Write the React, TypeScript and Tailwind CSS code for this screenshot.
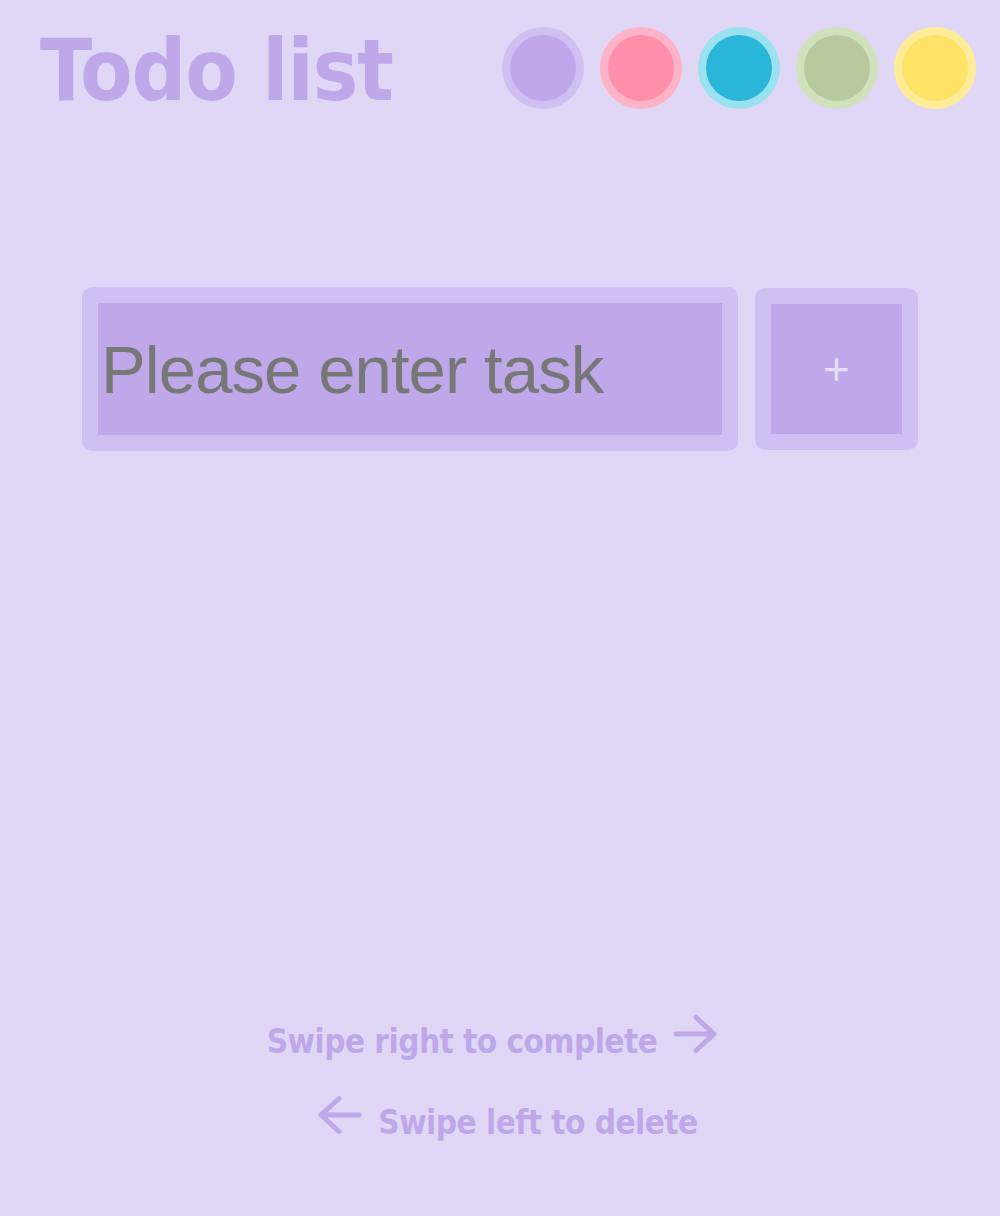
import React from 'react'

const swatches = [
  { ring: 'bg-[#d0bff2]', fill: 'bg-[#bea8ea]' },
  { ring: 'bg-[#ffb3c6]', fill: 'bg-[#ff8fab]' },
  { ring: 'bg-[#9ae2ef]', fill: 'bg-[#29b6d8]' },
  { ring: 'bg-[#d1e1bb]', fill: 'bg-[#b7c99d]' },
  { ring: 'bg-[#ffec99]', fill: 'bg-[#ffe366]' },
]

const Arrow: React.FC<{ dir: 'left' | 'right' }> = ({ dir }) => (
  <svg width="44" height="38" viewBox="0 0 44 38" className="mx-[16px] mb-[16px] shrink-0">
    {dir === 'right' ? (
      <path d="M3 19 H41 M23 2.5 L41 19 L23 35.5" fill="none" stroke="#bea8ea" strokeWidth="5" strokeLinecap="round" strokeLinejoin="round" />
    ) : (
      <path d="M41 19 H3 M21 2.5 L3 19 L21 35.5" fill="none" stroke="#bea8ea" strokeWidth="5" strokeLinecap="round" strokeLinejoin="round" />
    )}
  </svg>
)

const App: React.FC = () => {
  return (
    <div className="min-h-[1216px] bg-[#e0d7f6] flex flex-col font-['Tahoma','DejaVu_Sans_Condensed','DejaVu_Sans',sans-serif]">
      <header className="flex items-start justify-between pl-[40px] pr-[24px] pt-[27px] h-[109px]">
        <h1 className="text-[85px] leading-[82px] font-bold text-[#bea8ea] tracking-[-1px] mt-[3px]">Todo list</h1>
        <div className="flex gap-[16px]">
          {swatches.map((s, i) => (
            <div key={i} className={`w-[82px] h-[82px] rounded-full ${s.ring} flex items-center justify-center`}>
              <div className={`w-[66px] h-[66px] rounded-full ${s.fill}`} />
            </div>
          ))}
        </div>
      </header>

      <section className="flex gap-[17px] pl-[82px] mt-[178px]">
        <div className="w-[656px] h-[164px] rounded-[10px] bg-[#d0bff2] p-[16px]">
          <input
            placeholder="Please enter task"
            className="w-full h-full bg-[#bea8ea] outline-none pl-[3px] text-[67px] tracking-[-0.9px] font-['Liberation_Sans',Arial,sans-serif] text-[#777] placeholder:text-[#777]"
          />
        </div>
        <div className="w-[163px] h-[162px] mt-[1px] rounded-[10px] bg-[#d0bff2] p-[16px]">
          <button className="w-full h-full bg-[#bea8ea] text-[#e6ddf7] text-[46px] leading-none font-['Liberation_Sans',Arial,sans-serif] flex items-center justify-center">
            +
          </button>
        </div>
      </section>

      <footer className="mt-auto pb-[66px] flex flex-col items-center gap-[27px] text-[33px] font-bold text-[#bea8ea] leading-[40px] tracking-[-0.5px]">
        <div className="flex items-center">
          <span>Swipe right to complete</span>
          <Arrow dir="right" />
        </div>
        <div className="flex items-center">
          <Arrow dir="left" />
          <span>Swipe left to delete</span>
        </div>
      </footer>
    </div>
  )
}

export default App
